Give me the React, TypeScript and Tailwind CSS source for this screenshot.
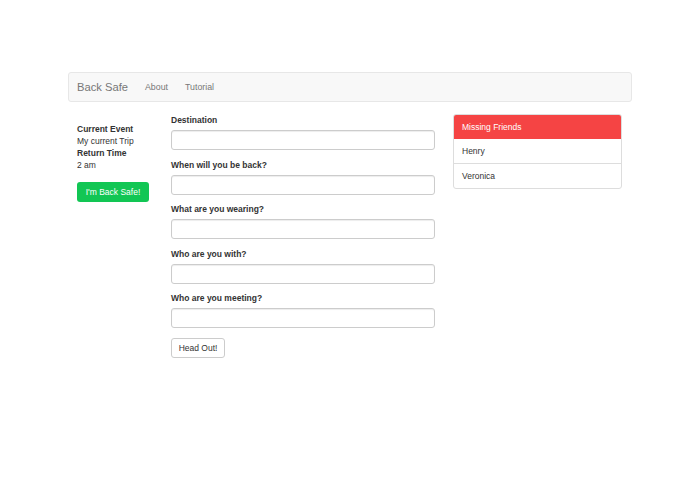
export default function App() {
  const fields = [
    "Destination",
    "When will you be back?",
    "What are you wearing?",
    "Who are you with?",
    "Who are you meeting?",
  ];

  return (
    <div className="min-h-[494px] w-full bg-white font-['Liberation_Sans',Arial,sans-serif] text-[#333]">
      <div className="ml-[68px] w-[564px] pt-[72px]">
        <nav className="flex h-[30px] items-center rounded-[3px] border border-[#e7e7e7] bg-[#f8f8f8] pl-[8px] pt-[1px]">
          <span className="text-[11.2px] text-[#777]">Back Safe</span>
          <span className="ml-[17px] pt-[1px] text-[8.8px] text-[#777]">About</span>
          <span className="ml-[17px] pt-[1px] text-[8.8px] text-[#777]">Tutorial</span>
        </nav>

        <div className="mt-[12px] flex">
          <div className="w-[103px] pl-[9px] pt-[9px] text-[8.5px] leading-[12px]">
            <div className="font-bold">Current Event</div>
            <div>My current Trip</div>
            <div className="font-bold">Return Time</div>
            <div>2 am</div>
            <button
              type="button"
              className="mt-[11px] h-[20px] w-[72px] rounded-[3px] bg-[#12c654] text-[8.5px] text-white"
            >
              I'm Back Safe!
            </button>
          </div>

          <div className="w-[264px]">
            {fields.map((f, i) => (
              <div key={f} className={i === 0 ? "" : "mt-[8.5px]"}>
                <div className="text-[8.5px] font-bold leading-[12px] text-[#333]">{f}</div>
                <input
                  type="text"
                  className="mt-[4px] block h-[20px] w-full rounded-[3px] border border-[#ccc] bg-white shadow-[inset_0_1px_1px_rgba(0,0,0,0.075)]"
                />
              </div>
            ))}
            <button
              type="button"
              className="mt-[10px] h-[20px] w-[54px] rounded-[3px] border border-[#ccc] bg-white text-[8.5px] text-[#333]"
            >
              Head Out!
            </button>
          </div>

          <div className="ml-[18px] w-[169px]">
            <div className="overflow-hidden rounded-[3px] border border-[#ddd]">
              <div className="flex h-[24px] items-center bg-[#f54444] pl-[8px] text-[8.5px] text-white">
                Missing Friends
              </div>
              <div className="flex h-[25px] items-center border-b border-[#ddd] pl-[8px] text-[8.5px]">
                Henry
              </div>
              <div className="flex h-[24px] items-center pl-[8px] text-[8.5px]">Veronica</div>
            </div>
          </div>
        </div>
      </div>
    </div>
  );
}
